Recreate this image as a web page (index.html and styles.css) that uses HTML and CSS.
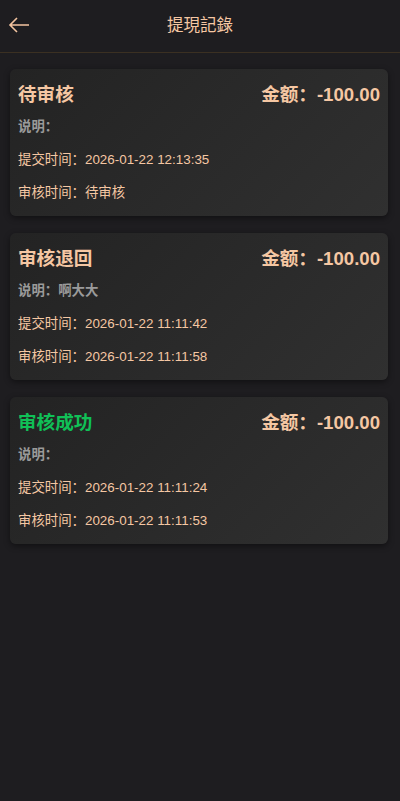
FILE: index.html
```html
<!DOCTYPE html>
<html lang="zh">
<head>
<meta charset="utf-8">
<link rel="stylesheet" href="styles.css">
</head>
<body>
<header class="nav">
  <span class="back"><svg width="22" height="16" viewBox="0 0 22 16"><path d="M21 8H2M9 1L2 8l7 7" fill="none" stroke="#f3c4a0" stroke-width="1.6"/></svg></span>
  <h1 class="title">提現記錄</h1>
</header>
<main class="list">
  <section class="card">
    <div class="card-head"><span class="status">待审核</span><span class="amount">金额：-100.00</span></div>
    <div class="row note">说明：</div>
    <div class="row">提交时间：2026-01-22 12:13:35</div>
    <div class="row">审核时间：待审核</div>
  </section>
  <section class="card">
    <div class="card-head"><span class="status">审核退回</span><span class="amount">金额：-100.00</span></div>
    <div class="row note">说明：啊大大</div>
    <div class="row">提交时间：2026-01-22 11:11:42</div>
    <div class="row">审核时间：2026-01-22 11:11:58</div>
  </section>
  <section class="card">
    <div class="card-head"><span class="status ok">审核成功</span><span class="amount">金额：-100.00</span></div>
    <div class="row note">说明：</div>
    <div class="row">提交时间：2026-01-22 11:11:24</div>
    <div class="row">审核时间：2026-01-22 11:11:53</div>
  </section>
</main>
</body>
</html>
```
FILE: styles.css
```css
html, body {
  margin: 0;
  padding: 0;
  background: #1e1d20;
  font-family: "Liberation Sans", Arial, "Noto Sans CJK SC", sans-serif;
  color: #f5c7a3;
  min-height: 801px;
}
.nav {
  height: 53px;
  box-sizing: border-box;
  padding-bottom: 5px;
  border-bottom: 1px solid #3b3022;
  display: flex;
  align-items: center;
  justify-content: center;
  position: relative;
}
.back {
  position: absolute;
  left: 8px;
  top: 17px;
  display: flex;
}
.title {
  margin: 0;
  font-size: 16.5px;
  font-weight: normal;
  color: #f5c7a3;
}
.list {
  padding: 16px 12px 0 10px;
  display: flex;
  flex-direction: column;
  gap: 17px;
}
.card {
  height: 147px;
  box-sizing: border-box;
  border-radius: 6px;
  background: linear-gradient(135deg, #232323, #303030);
  box-shadow: 0 2px 6px rgba(0,0,0,0.45);
  padding: 10px 8px 0 8px;
}
.card-head {
  display: flex;
  justify-content: space-between;
  align-items: center;
  height: 27px;
  font-weight: bold;
  font-size: 18.6px;
}
.status { color: #f5c7a3; }
.status.ok { color: #10c057; }
.amount { color: #f5c7a3; }
.row {
  font-size: 13.4px;
  line-height: 17px;
  margin-top: 16px;
  color: #f5c7a3;
}
.card-head + .row { margin-top: 12px; }
.note {
  color: #9a9a9a;
  font-weight: bold;
}
```
